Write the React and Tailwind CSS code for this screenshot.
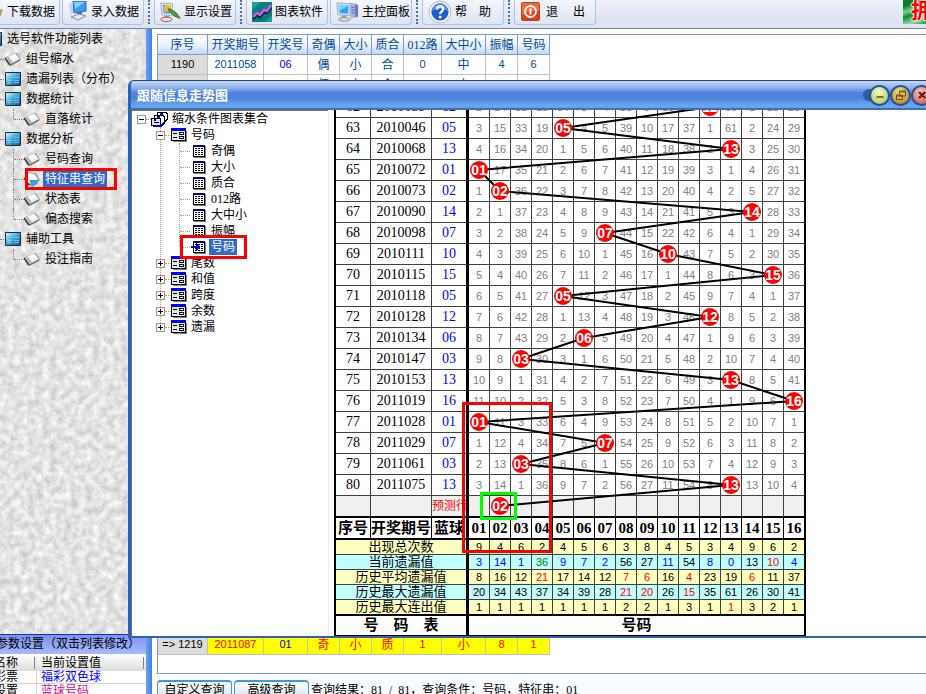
import React, { useState } from 'react';

const TOOLBAR = [
    { label: '下载数据', icon: 'download' },
    { label: '录入数据', icon: 'input', sep: true },
    { label: '显示设置', icon: 'display', sep: true },
    { label: '图表软件', icon: 'chart' },
    { label: '主控面板', icon: 'panel', sep: true },
    { label: '帮\u3000助', icon: 'help', sep: true },
    { label: '退\u3000 出', icon: 'exit' },
];

const MENU = [
    { label: '选号软件功能列表', level: 0 },
    { label: '组号缩水', level: 1, leaf: true },
    { label: '遗漏列表（分布）', level: 1 },
    { label: '数据统计', level: 1 },
    { label: '直落统计', level: 2, last: true },
    { label: '数据分析', level: 1 },
    { label: '号码查询', level: 2 },
    { label: '特征串查询', level: 2, marked: true },
    { label: '状态表', level: 2 },
    { label: '偏态搜索', level: 2, last: true },
    { label: '辅助工具', level: 1 },
    { label: '投注指南', level: 2, last: true },
];

const GRID_HEAD = ['序号', '开奖期号', '开奖号', '奇偶', '大小', '质合', '012路', '大中小', '振幅', '号码'];
const GRID_WIDTHS = ['w-[50px]', 'w-[56px]', 'w-[44px]', 'w-[32px]', 'w-[32px]', 'w-[32px]', 'w-[38px]', 'w-[44px]', 'w-[32px]', 'w-[32px]'];
const GRID_ROWS = [
    ['1190', '2011058', '06', '偶', '小', '合', '0', '中', '4', '6'],
    ['1191', '2011059', '10', '偶', '小', '合', '1', '中', '4', '0'],
];
const GRID_LAST = ['=> 1219', '2011087', '01', '奇', '小', '质', '1', '小', '8', '1'];

const GROUPS = ['尾数', '和值', '跨度', '余数', '遗漏'];
const LEAVES = ['奇偶', '大小', '质合', '012路', '大中小', '振幅', '号码'];

// draw number, issue, blue ball
const DRAWS = [
    [62, '2010039', 12], [63, '2010046', 5], [64, '2010068', 13], [65, '2010072', 1],
    [66, '2010073', 2], [67, '2010090', 14], [68, '2010098', 7], [69, '2010111', 10],
    [70, '2010115', 15], [71, '2010118', 5], [72, '2010128', 12], [73, '2010134', 6],
    [74, '2010147', 3], [75, '2010153', 13], [76, '2011019', 16], [77, '2011028', 1],
    [78, '2011029', 7], [79, '2011061', 3], [80, '2011075', 13],
];
const FORECAST = 2;
const START = [1, 13, 31, 17, 33, 2, 3, 37, 8, 15, 35, 0, 59, 0, 22, 27];
const BALLS = Array.from({ length: 16 }, (_, i) => i + 1);

const SMALL_DIGITS = "text-[11px] [font-family:'Liberation_Sans',sans-serif]";

const pad = (n) => String(n).padStart(2, '0');
const isNumeric = (v) => /^[\d=> ]+$/.test(v);

// misses since the last hit, 0 where the number was drawn
const trend = () => {
    let miss = START;
    return DRAWS.map(([, , hit]) => {
        miss = miss.map((m, i) => (i + 1 === hit ? 0 : m + 1));
        return miss;
    });
};

const STATS = [
    { label: '出现总次数', values: [9, 4, 6, 2, 4, 5, 6, 3, 8, 4, 5, 3, 4, 9, 6, 2] },
    {
        label: '当前遗漏值',
        values: [3, 14, 1, 36, 9, 7, 2, 56, 27, 11, 54, 8, 0, 13, 10, 4],
        blue: [1, 2, 3, 5, 6, 7, 10, 12, 13, 16], green: [4], red: [15],
    },
    { label: '历史平均遗漏值', values: [8, 16, 12, 21, 17, 14, 12, 7, 6, 16, 4, 23, 19, 6, 11, 37], red: [4, 8, 9, 11, 14] },
    { label: '历史最大遗漏值', values: [20, 34, 43, 37, 34, 39, 28, 21, 20, 26, 15, 35, 61, 26, 30, 41], red: [8, 9, 11] },
    { label: '历史最大连出值', values: [1, 1, 1, 1, 1, 1, 1, 2, 2, 1, 3, 1, 1, 3, 2, 1], red: [13] },
];

const statColor = (s, n) => {
    if (s.red?.includes(n)) return 'text-[#ff0000]';
    if (s.blue?.includes(n)) return 'text-[#0000ff]';
    if (s.green?.includes(n)) return 'text-[#008000]';
    return 'text-black';
};

const ToolIcon = ({ name }) => {
    switch (name) {
        case 'chart':
            return (
                <svg width="20" height="20" viewBox="0 0 20 20">
                    <rect width="20" height="20" fill="#0b7f7f" />
                    <path d="M0 8 9 0H0zM13 20l7-6v6z" fill="#16a3a0" />
                    <path d="M1 17l4-4 3 2 4-5 3 1 4-6" fill="none" stroke="#082c3c" strokeWidth="3" />
                    <path d="M1 15l4-4 3 2 4-5 3 1 4-6" fill="none" stroke="#d35be8" strokeWidth="2.4" />
                </svg>
            );
        case 'help':
            return (
                <svg width="24" height="24" viewBox="0 0 24 24">
                    <circle cx="12" cy="12" r="11" fill="#f4f4f4" stroke="#b9b9b9" />
                    <circle cx="12" cy="12" r="8.6" fill="#1f5fcb" />
                    <path d="M4 11a8 8 0 0 1 16 0c-5-3-11-3-16 0z" fill="#5b95ea" />
                    <path d="M9 9.5c0-4 6.4-4 6.2-.3-.1 2.2-3 2.3-3 4.8" fill="none" stroke="#fff" strokeWidth="2.3" />
                    <circle cx="12.2" cy="17" r="1.5" fill="#fff" />
                </svg>
            );
        case 'exit':
            return (
                <svg width="23" height="20" viewBox="-1 0 23 20">
                    <rect x=".5" y=".5" width="18" height="18" rx="1.5" fill="#dd3f17" stroke="#b8442a" />
                    <path d="M1 1h17v8C11 8 7 10 1 13z" fill="#ee6b40" />
                    <circle cx="9.5" cy="9.5" r="5.5" fill="none" stroke="#fff" strokeWidth="1.8" />
                    <path d="M9.500 6.500v6" stroke="#fff" strokeWidth="2" />
                </svg>
            );
        case 'panel':
            return (
                <svg width="23" height="22" viewBox="0 0 25 24">
                    <path d="M15 2l7 1 2 2v12l-8 2z" fill="#a9b0dc" />
                    <path d="M21 3l3 2v12l-3 1z" fill="#6d76b4" />
                    <path d="M17 7h4M17 10h4M17 13h4" stroke="#5f69ad" />
                    <path d="M1 2l15 1-1 13-13-1z" fill="#d7e3f5" stroke="#8ea5cd" />
                    <path d="M3 4l11 1-1 9-9-1z" fill="#2aa2f0" />
                    <path d="M3 4l11 1-10 6z" fill="#7fd2fb" />
                    <path d="M6 16h5v3H6z" fill="#9a9fae" />
                    <ellipse cx="9" cy="20" rx="6.5" ry="2" fill="#d6d8de" stroke="#888d99" />
                </svg>
            );
        case 'display':
            return (
                <svg width="21" height="21" viewBox="1 0 23 21">
                    <path d="M2 0l13 1-1 13-11-1z" fill="#e2e8ef" stroke="#93a7c0" />
                    <path d="M4 2l9 1-1 9-7-1z" fill="#38a4ea" />
                    <circle cx="9" cy="6" r="4" fill="#f0b43a" />
                    <path d="M11 6l8 5 4 6-7-3-6-6z" fill="#4aa32d" stroke="#2a6c1b" />
                    <path d="M6 14h5v2H6z" fill="#9a9fae" />
                    <ellipse cx="8" cy="18" rx="6" ry="2.5" fill="#e0e0e4" stroke="#a23b3b" />
                </svg>
            );
        case 'download':
            return (
                <svg width="20" height="20" viewBox="0 0 20 20">
                    <path d="M4 1h11v14H4z" fill="#6d8fd6" stroke="#3d5ca6" />
                    <path d="M12 8h6l-3 8z" fill="#f5c542" stroke="#96741c" />
                </svg>
            );
        default:
            return (
                <svg width="20" height="22" viewBox="0 0 20 22">
                    <path d="M5 0h13v10l-12 2z" fill="#3d9be8" stroke="#2a68b4" />
                    <path d="M6 1h11L7 8z" fill="#86cdfa" />
                    <path d="M1 3l4-2v11l-2 2z" fill="#c3d2ea" />
                    <path d="M9 11h5v4H9z" fill="#3572b7" />
                    <path d="M3 16l8-3 7 2-8 4z" fill="#e9e9ee" stroke="#8b909c" />
                </svg>
            );
    }
};

const LeafIcon = ({ active }) => (
    <svg width="16" height="16" viewBox="0 0 16 16" className="shrink-0">
        <path d="M0 7l9-5 3 0 4 6-1 2-9 5-3-1-3-6z" fill="#9c9c9c" />
        <path d="M2 6l8-4 5 6-9 5z" fill="#ececec" />
        <path d="M4 6l6-3 3 3-7 4z" fill="#fafafa" />
        <path d="M0 7l3-2 5 6-3 3z" fill="#b8b8b8" />
        <path d="M0 7l5 7" fill="none" stroke="#222" strokeWidth="1.2" />
        <path d="M5 14l10-5" fill="none" stroke="#666" strokeWidth="1" />
        {active && <path d="M4 1l8 3 2 8-6 3-5-5z" fill="#fff" stroke="#888" strokeWidth=".6" />}
        {active && <path d="M5 9l9 0-1 4-5 3z" fill="#3aa0dc" />}
    </svg>
);

const FolderIcon = () => (
    <svg width="16" height="14" viewBox="0 0 16 14" className="shrink-0">
        <defs>
            <linearGradient id="screen" x1="0" y1="0" x2="1" y2="1">
                <stop offset="0" stopColor="#d2f6fb" />
                <stop offset=".45" stopColor="#49b0dc" />
                <stop offset="1" stopColor="#1a4f9c" />
            </linearGradient>
        </defs>
        <rect width="16" height="14" rx="1" fill="#1a2c44" />
        <rect x="1" y="1" width="14" height="12" fill="url(#screen)" />
        <path d="M9 5.500h5M9 8.500h5M3 8.500h4M3 10.500h3M9 10.500h5" stroke="#8fdcf0" strokeOpacity=".7" />
    </svg>
);

const MenuItem = ({ item, selected, onSelect }) => (
    <li className="relative flex h-5 items-center">
        {item.level === 0 && <span className="-ml-[14px] flex items-center"><FolderIcon /></span>}
        {item.level === 1 && <span className="mr-px w-1 border-t border-dotted border-[#808080]" />}
        {item.level === 2 && (
            <>
                <span className={`ml-[13px] border-l border-dotted border-[#808080] ${item.last ? 'h-[10px] self-start' : 'h-5'}`} />
                <span className="w-[10px] border-t border-dotted border-[#808080]" />
            </>
        )}
        {item.level > 0 && (item.level === 2 || item.leaf ? <LeafIcon active={selected} /> : <FolderIcon />)}
        <button
            type="button"
            onClick={onSelect}
            className={`ml-[3px] h-4 px-[2px] leading-4 whitespace-nowrap ${selected ? 'bg-[#316ac5] text-white' : 'text-black'}`}
        >
            {item.label}
        </button>
        {item.marked && <span className="pointer-events-none absolute -top-px left-[25px] h-[22px] w-[92px] border-[3px] border-[#ff0000]" />}
    </li>
);

const Toggle = ({ open, onClick }) => (
    <button type="button" aria-label={open ? '-' : '+'} onClick={onClick} className="relative z-10 h-[9px] w-[9px] shrink-0 bg-white">
        <svg width="9" height="9" viewBox="0 0 9 9" shapeRendering="crispEdges">
            <rect x=".5" y=".5" width="8" height="8" fill="#fff" stroke="#9b9888" />
            <path d={open ? 'M2 4.500h5' : 'M2 4.500h5M4.500 2v5'} stroke="#000" />
        </svg>
    </button>
);

const Dots = ({ className }) => <span className={`shrink-0 border-t border-dotted border-[#9b9888] ${className}`} />;

const StackIcon = () => (
    <svg width="17" height="15" viewBox="0 0 17 15" shapeRendering="crispEdges" className="shrink-0">
        <path d="M6 .5h9l1 1v6l-2 2h-8z" fill="#fff" stroke="#000" />
        <path d="M3 3.500h9l1 1v6l-2 2H3z" fill="#fff" stroke="#000" />
        <path d="M.5 6.500h9v7h-9z" fill="#ddd" stroke="#000" />
        <path d="M9 2h3M6 5h3M3 8h2M2 14h8l3-3" stroke="#0000cc" strokeWidth="2" fill="none" />
        <path d="M3 10.500h5" stroke="#000" />
    </svg>
);

const FormIcon = () => (
    <svg width="16" height="14" viewBox="0 0 16 14" shapeRendering="crispEdges" className="shrink-0">
        <path d="M2 13.500h13.500V3" stroke="#808080" fill="none" />
        <rect x=".5" y=".5" width="14" height="12" fill="#e4e4e4" stroke="#000" />
        <rect width="15" height="3" fill="#0000ff" />
        <path d="M2 5.500h4M2 9.500h4" stroke="#000" />
        <path d="M8.500 4.500h4v2h-4zM8.500 8.500h4v2h-4z" stroke="#000" fill="#fff" />
    </svg>
);

const SheetIcon = ({ active }) => (
    <svg width="15" height="13" viewBox="-2 0 15 13" shapeRendering="crispEdges" className="-ml-[2px] shrink-0">
        <path d="M1 12.500h11.500V1" stroke="#808080" fill="none" />
        <rect x=".5" y=".5" width="11" height="11" fill="#fff" stroke="#000" />
        <rect width="12" height="2" fill="#000080" />
        <path d="M2 3.500h8M2 5.500h8M2 7.500h8M2 9.500h8" stroke="#000" strokeDasharray="2 1" />
        {active && <path d="M-2 5h5V2l5 4-5 4V7h-5z" fill="#0000ff" />}
    </svg>
);

const ConditionTree = () => {
    const [open, setOpen] = useState(true);
    const [picked, setPicked] = useState('号码');

    return (
        <div className="w-[197px] shrink-0 overflow-hidden border-t border-l border-[#716f64] bg-white">
            <div className="flex h-4 items-center pl-[5px]">
                <Toggle open={open} onClick={() => setOpen(!open)} />
                <Dots className="w-[5px]" />
                <StackIcon />
                <span className="ml-1 leading-4">缩水条件图表集合</span>
            </div>
            <ul className="relative">
                <li className="absolute top-0 left-[28px] h-[200px] border-l border-dotted border-[#9b9888]" />
                <li className="relative">
                    <div className="flex h-4 items-center pl-6">
                        <Toggle open={open} onClick={() => setOpen(!open)} />
                        <Dots className="w-[6px]" />
                        <FormIcon />
                        <span className="ml-1 leading-4">号码</span>
                    </div>
                    <ul className="relative">
                        <li className="absolute top-0 left-[47px] h-[104px] border-l border-dotted border-[#9b9888]" />
                        {LEAVES.map((name) => (
                            <li key={name} className="relative flex h-4 items-center pl-[48px]">
                                <Dots className="mr-[3px] w-[10px]" />
                                <SheetIcon active={picked === name} />
                                <button
                                    type="button"
                                    onClick={() => setPicked(name)}
                                    className={`ml-[3px] h-4 px-[2px] leading-4 ${picked === name ? 'bg-[#316ac5] text-white' : ''}`}
                                >
                                    {name}
                                </button>
                                {name === '号码' && <span className="pointer-events-none absolute -top-1 left-[48px] z-20 h-6 w-[67px] border-[3px] border-[#ff0000]" />}
                            </li>
                        ))}
                    </ul>
                </li>
                {GROUPS.map((name) => (
                    <li key={name} className="relative flex h-4 items-center pl-6">
                        <Toggle />
                        <Dots className="w-[6px]" />
                        <FormIcon />
                        <span className="ml-1 leading-4">{name}</span>
                    </li>
                ))}
            </ul>
        </div>
    );
};

const Ball = ({ n }) => (
    <span className="relative z-10 mx-auto flex h-[18px] w-[18px] items-center justify-center rounded-full bg-[#ff0000] text-[14px] leading-none font-bold text-white [font-family:'Liberation_Sans',sans-serif]">
        {pad(n)}
    </span>
);

const TrendChart = () => {
    const hits = [...DRAWS.map((d) => d[2]), FORECAST];
    const points = hits.map((n, i) => `${145 + 21 * (n - 1)},${10 + 21 * i}`).join(' ');
    const misses = trend();
    const cell = 'h-[21px] border-r border-b border-[#404040] p-0 leading-none';

    return (
        <div className="relative w-[472px] shrink-0">
            <table className="w-full table-fixed border-separate border-spacing-0 border-l-2 border-black bg-white text-center whitespace-nowrap">
                <colgroup>
                    <col className="w-[35px]" />
                    <col className="w-[61px]" />
                    <col className="w-[37px]" />
                    {BALLS.map((n) => <col key={n} className={n === 16 ? 'w-[22px]' : 'w-[21px]'} />)}
                </colgroup>
                <tbody>
                    {DRAWS.map(([no, issue, hit], i) => (
                        <tr key={no} className="text-[14px]">
                            <td className={cell}>{no}</td>
                            <td className={cell}>{issue}</td>
                            <td className={`${cell} border-r-[3px] border-r-black text-[#0000ff]`}>{pad(hit)}</td>
                            {misses[i].map((m, k) => (
                                <td key={k} className={`${cell} ${SMALL_DIGITS} text-[#808080] ${k === 15 ? 'border-r-2 border-r-black' : ''}`}>
                                    {m === 0 ? <Ball n={hit} /> : m}
                                </td>
                            ))}
                        </tr>
                    ))}
                    <tr className="bg-[#f0f0f0]">
                        <td className="h-[22px] border-r border-b-2 border-r-[#404040] border-b-black p-0" />
                        <td className="border-r border-b-2 border-r-[#404040] border-b-black p-0" />
                        <td className="overflow-hidden border-r-[3px] border-b-2 border-black p-0 text-[12px] leading-none text-[#ff0000]">预测行</td>
                        {BALLS.map((n) => (
                            <td key={n} className={`border-b-2 border-b-black p-0 ${n === 16 ? 'border-r-2 border-r-black' : 'border-r border-r-[#404040]'}`}>
                                {n === FORECAST && <Ball n={n} />}
                            </td>
                        ))}
                    </tr>
                    <tr className="text-[15px]">
                        <th className="h-[22px] border-r border-b-2 border-black p-0 leading-none">序号</th>
                        <th className="border-r border-b-2 border-black p-0 leading-none">开奖期号</th>
                        <th className="overflow-hidden border-r-[3px] border-b-2 border-black p-0 leading-none">蓝球</th>
                        {BALLS.map((n) => (
                            <th key={n} className={`border-b-2 border-black p-0 leading-none ${n === 16 ? 'border-r-2' : 'border-r'}`}>{pad(n)}</th>
                        ))}
                    </tr>
                    {STATS.map((s, i) => {
                        const last = i === STATS.length - 1;
                        const edge = last ? 'h-4 border-b-2 border-b-black' : 'h-[15px] border-b border-b-[#404040]';
                        return (
                            <tr key={s.label} className={i % 2 ? 'bg-[#c0ffff]' : 'bg-[#ffffc0]'}>
                                <th colSpan={3} className={`${edge} border-r-[3px] border-r-black p-0 text-[13px] leading-3 font-normal`}>{s.label}</th>
                                {s.values.map((v, k) => (
                                    <td key={k} className={`${edge} ${SMALL_DIGITS} p-0 leading-3 ${statColor(s, k + 1)} ${k === 15 ? 'border-r-2 border-r-black' : 'border-r border-r-[#404040]'}`}>
                                        {v}
                                    </td>
                                ))}
                            </tr>
                        );
                    })}
                    <tr className="text-[15px] font-bold">
                        <td colSpan={3} className="h-5 border-r-[3px] border-b border-black p-0 leading-none">号&emsp;码&emsp;表</td>
                        <td colSpan={16} className="border-r-2 border-b border-black p-0 leading-none">号码</td>
                    </tr>
                </tbody>
            </table>
            <svg className="pointer-events-none absolute top-0 left-0 h-full w-full">
                <polyline points={points} fill="none" stroke="#000" strokeWidth="2" />
            </svg>
            <span className="pointer-events-none absolute bottom-[83px] left-[128px] z-20 h-[151px] w-[90px] border-[3px] border-[#ff0000]" />
            <span className="pointer-events-none absolute bottom-[116px] left-[146px] z-20 h-7 w-[37px] border-[3px] border-[#00ff00]" />
        </div>
    );
};

const CaptionButton = ({ label, className, children }) => (
    <button type="button" aria-label={label} className={`flex h-[21px] w-[21px] items-center justify-center rounded-full border-[2px] border-[#264f9e] ${className}`}>
        <svg width="14" height="14" viewBox="0 0 14 14" fill="none">{children}</svg>
    </button>
);

const TrendWindow = () => (
    <section className="absolute top-[80px] right-0 left-[128px] flex h-[558px] flex-col rounded-tl-md border-t border-b-2 border-l-[3px] border-t-[#1f4a70] border-b-[#2b62b5] border-l-[#2b62b5] bg-white">
        <header className="flex h-[29px] shrink-0 items-center overflow-hidden rounded-tl border-b border-[#4a6f9c] bg-[linear-gradient(#c6d6f4_0%,#8fb0ec_25%,#4f82df_42%,#4f82df_60%,#6aa6ee_88%,#6aa6ee_94%,#2c5ba6_100%)]">
            <h1 className="pl-[6px] text-[13px] leading-none font-bold text-white">跟随信息走势图</h1>
            <div className="-mr-[6px] ml-auto flex items-center">
                <span className="-mr-1 h-3 w-[10px] rounded-l-full bg-[#2f5aa8]" />
                <CaptionButton label="最小化" className="bg-[radial-gradient(circle_at_45%_30%,#f4f9cc,#c3da74_60%,#a5c24a)]">
                    <path d="M3.500 9h7" stroke="#6c7a2a" strokeWidth="2" />
                </CaptionButton>
                <CaptionButton label="还原" className="bg-[radial-gradient(circle_at_45%_30%,#f3df8a,#cfa23a_60%,#a8791c)]">
                    <path d="M5.500 3h6v5h-6zM5.500 4h6M2.500 7h6v4.500h-6zM2.500 8h6" stroke="#6b4c0c" />
                </CaptionButton>
                <CaptionButton label="关闭" className="bg-[radial-gradient(circle_at_45%_30%,#f9cfc4,#dd7b6c_60%,#bb483b)]">
                    <path d="M4 4l6 6M10 4l-6 6" stroke="#6d1d18" strokeWidth="2.4" />
                </CaptionButton>
            </div>
        </header>
        <div className="flex min-h-0 flex-1">
            <ConditionTree />
            <div className="flex flex-1 items-end overflow-hidden border-l border-[#f0eee6] pl-[5px]">
                <TrendChart />
            </div>
        </div>
    </section>
);

const Toolbar = () => (
    <header className="flex h-[29px] shrink-0 items-start overflow-hidden border-b border-[#6f84b8] bg-[linear-gradient(#eff2fa,#dde3f1_70%,#dde3f1)]">
        <nav className="-ml-[22px] flex shrink-0 gap-[2px]">
            {TOOLBAR.map((t) => (
                <React.Fragment key={t.label}>
                    <button
                        type="button"
                        className="flex h-[25px] w-[82px] items-center gap-[3px] rounded-b border border-t-0 border-[#b0c4e2] bg-[linear-gradient(#f3f6fc,#dde4f3)] pl-[5px] whitespace-nowrap"
                    >
                        <span className="shrink-0"><ToolIcon name={t.icon} /></span>
                        {t.label}
                    </button>
                    {t.sep && <span className="mx-[2px] h-6 w-[2px] border-l-2 border-dotted border-[#4a6fae]" />}
                </React.Fragment>
            ))}
        </nav>
        <div className="ml-auto h-6 w-[23px] shrink-0 overflow-hidden bg-[linear-gradient(160deg,#0f7a2e_20%,#7fcf8c_40%,#0f8a35_55%,#8fdc9d_80%,#1c9440)] pl-2 text-[22px] leading-[22px] font-bold text-[#ff0000] [text-shadow:1px_0_#fff,-1px_0_#fff,0_1px_#fff,0_-1px_#fff]">
            拥
        </div>
    </header>
);

const Sidebar = () => {
    const [active, setActive] = useState('特征串查询');

    return (
        <aside className="flex w-[146px] shrink-0 flex-col overflow-hidden">
            <div className="relative min-h-0 flex-1 overflow-hidden bg-[#e2e2e2]">
                <svg className="absolute inset-0 h-full w-full">
                    <filter id="paper" colorInterpolationFilters="sRGB">
                        <feTurbulence type="fractalNoise" baseFrequency="0.14" numOctaves="4" seed="4" />
                        <feColorMatrix values="0.28 0 0 0 0.75  0.28 0 0 0 0.75  0.28 0 0 0 0.75  0 0 0 0 1" />
                    </filter>
                    <rect width="100%" height="100%" filter="url(#paper)" />
                </svg>
                <ul className="relative">
                    {MENU.map((m) => (
                        <MenuItem key={m.label} item={m} selected={active === m.label} onSelect={() => setActive(m.label)} />
                    ))}
                </ul>
            </div>
            <h2 className="-ml-1 h-5 shrink-0 border-t border-[#0a35c8] bg-[linear-gradient(#7d92f2,#a9b9fb)] leading-[19px] whitespace-nowrap">参数设置（双击列表修改）</h2>
            <div className="h-10 shrink-0 overflow-hidden">
                <table className="-ml-[6px] w-[152px] table-fixed border-separate border-spacing-0 bg-white text-left">
                    <thead>
                        <tr className="bg-[linear-gradient(#ffffff,#dcdcdc)]">
                            <th className="h-[17px] w-[43px] p-0 leading-none font-normal">
                                <span className="flex justify-between pr-[2px]">名称<i className="h-3 border-l border-[#808080]" /></span>
                            </th>
                            <th className="p-0 pl-1 leading-none font-normal">
                                <span className="flex justify-between pr-[2px]">当前设置值<i className="h-3 border-l border-[#808080]" /></span>
                            </th>
                        </tr>
                    </thead>
                    <tbody>
                        <tr>
                            <td className="h-[13px] border-r border-b border-[#d8d8c8] p-0 leading-3">彩票</td>
                            <td className="border-b border-[#d8d8c8] p-0 pl-1 leading-3 text-[#0000ff]">福彩双色球</td>
                        </tr>
                        <tr>
                            <td className="h-[13px] border-r border-[#d8d8c8] p-0 leading-3">设置</td>
                            <td className="p-0 pl-1 leading-3 text-[#c71585]">蓝球号码</td>
                        </tr>
                    </tbody>
                </table>
            </div>
        </aside>
    );
};

const ResultGrid = () => (
    <table className="w-[392px] table-fixed border-separate border-spacing-0 text-center whitespace-nowrap text-[#004a94]">
        <thead>
            <tr className="bg-[linear-gradient(#ffffff,#eaf1fd_50%,#bfd5f7)]">
                {GRID_HEAD.map((h, i) => (
                    <th key={h} className={`${GRID_WIDTHS[i]} h-5 border-r border-b border-[#7f9db9] p-0 leading-none font-normal`}>{h}</th>
                ))}
            </tr>
        </thead>
        <tbody>
            {GRID_ROWS.map((row) => (
                <tr key={row[0]}>
                    {row.map((v, i) => (
                        <td
                            key={i}
                            className={`h-5 border-r border-b border-[#c0c0c0] p-0 leading-none ${isNumeric(v) ? SMALL_DIGITS : ''} ${i === 0 ? 'bg-[#dcdcdc] text-black' : ''} ${i === 2 ? 'text-[#0000cc]' : ''}`}
                        >
                            {v}
                        </td>
                    ))}
                </tr>
            ))}
            <tr><td colSpan={10} className="h-[540px] border-r border-[#c0c0c0] p-0" /></tr>
            <tr className="bg-[#ffff00]">
                {GRID_LAST.map((v, i) => (
                    <td
                        key={i}
                        className={`h-5 border-r border-b border-[#c0c0c0] p-0 leading-none ${isNumeric(v) ? SMALL_DIGITS : ''} ${i === 0 ? 'bg-[#dcdcdc] text-black' : i === 2 ? 'text-[#0000cc]' : 'text-[#ff0000]'}`}
                    >
                        {v}
                    </td>
                ))}
            </tr>
        </tbody>
    </table>
);

export default function App() {
    return (
        <div className="relative flex h-screen flex-col overflow-hidden bg-white text-[12px] text-black [font-family:'Liberation_Serif','Noto_Sans_CJK_SC',serif]">
            <Toolbar />
            <div className="flex min-h-0 flex-1">
                <Sidebar />
                <div className="w-[6px] shrink-0 bg-[linear-gradient(90deg,#6aa0f0,#3f7fe6)]" />
                <main className="flex min-w-0 flex-1 flex-col pl-[5px]">
                    <div className="mt-[5px] min-h-0 flex-1 overflow-hidden border border-r-0 border-[#7f9db9]">
                        <ResultGrid />
                    </div>
                    <footer className="flex h-5 shrink-0 items-start gap-[2px] overflow-hidden bg-[#fafbfe] pt-[6px] whitespace-nowrap">
                        <button type="button" className="h-5 w-[75px] shrink-0 rounded-t border border-t-2 border-[#3c9ad6] bg-[linear-gradient(#ffffff,#d5dfea)] leading-[17px]">自定义查询</button>
                        <button type="button" className="h-5 w-[75px] shrink-0 rounded-t border border-t-2 border-[#3c9ad6] bg-[linear-gradient(#ffffff,#d5dfea)] leading-[17px]">高级查询</button>
                        <p className="leading-5">查询结果：81&nbsp;&nbsp;/&nbsp;&nbsp;81，查询条件：号码，特征串：01</p>
                    </footer>
                </main>
            </div>
            <TrendWindow />
        </div>
    );
}
